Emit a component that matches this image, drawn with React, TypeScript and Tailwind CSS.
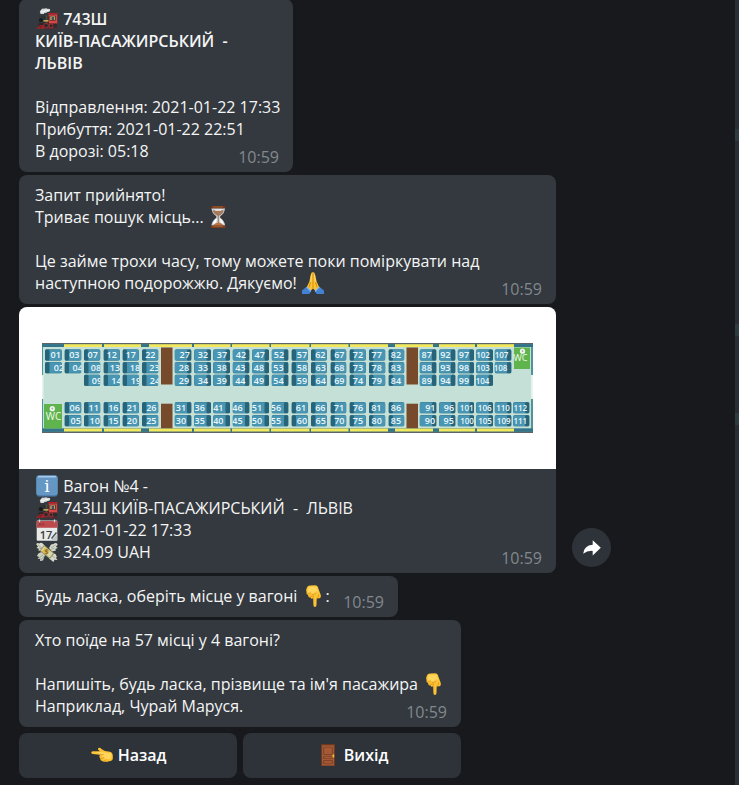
import type { ReactNode } from "react";

const FONT = "'Open Sans', 'Noto Sans', sans-serif";

function Emoji({ label, children }: { label: string; children: ReactNode }) {
  return (
    <svg viewBox="0 0 22 22" role="img" aria-label={label} className="mx-px inline-block size-[22px] align-top">
      {children}
    </svg>
  );
}

function Locomotive() {
  return (
    <Emoji label="Потяг">
      <path d="M5 2.2Q5.500 0 8 .8Q10 -.4 12 .9Q14.500 .6 14.200 2.600Q14 4.200 11.500 4Q10 5.300 8.600 4.800L7.600 6.200L4.500 6.100L4.200 4.500Q3.200 3 5 2.200Z" fill="#d9dadb" />
      <path d="M5 3.500Q7 4.500 9 3.200M9 2Q11 3 12.500 2.400" stroke="#f6f6f6" strokeWidth="1" fill="none" />
      <path d="M3.800 6h5l-.8 2.500v2.500h-3.600V8.500Z" fill="#35383b" />
      <rect x="3" y="8.600" width="11" height="7.800" rx="1.500" fill="#25282a" />
      <circle cx="5" cy="12" r="3.600" fill="#33373a" />
      <circle cx="5" cy="12" r="2" fill="#17191b" />
      <path d="M9.500 7.500h2V17h-2z" fill="#4a4a40" />
      <rect x="7.500" y="12.200" width="5" height="1.300" fill="#e0bd62" />
      <rect x="12" y="5" width="9.800" height="1.600" rx=".6" fill="#b71f25" />
      <rect x="12.800" y="6.600" width="8.400" height="9.900" fill="#db4543" />
      <rect x="13.600" y="7.800" width="6.200" height="4.800" fill="#3d2a2c" />
      <path d="M14.300 8.400h4.800v3.600h-4.800z" fill="#d9b566" />
      <path d="M15.600 9h2.600v3h-2.600z" fill="#3f4f5e" />
      <path d="M1.500 18L4 15.500H21v2.500Z" fill="#2c2526" />
      <circle cx="10" cy="17.500" r="2.800" fill="#8f2c30" />
      <circle cx="10" cy="17.500" r="1.800" fill="#272b2e" />
      <circle cx="15" cy="17.700" r="2.500" fill="#a92c30" />
      <circle cx="15" cy="17.700" r="1.500" fill="#272b2e" />
      <circle cx="19.300" cy="17.800" r="2" fill="#302b2d" />
      <path d="M0 20.800L4 17H7.500L8 20.800Z" fill="#a8252a" />
      <path d="M2 20.500l3-3M4.500 20.500l1.700-3" stroke="#58181b" strokeWidth=".8" />
      <path d="M8 20.600H21.500" stroke="#6d2427" strokeWidth=".8" />
    </Emoji>
  );
}

function Hourglass() {
  return (
    <Emoji label="Пісковий годинник">
      <g transform="translate(-2 0)">
        <path d="M4.500 2h13.500q0 5-4.800 8.200v1.600Q18 15 18 20H4.500q0-5 4.800-8.200v-1.600Q4.500 7 4.500 2Z" fill="#c8d0d6" />
        <path d="M5.700 4.500Q11 3 16.800 4.500Q16 8 11.300 10.300Q6.500 8 5.700 4.500Z" fill="#a5795a" />
        <path d="M7 3h8.500L14 5H8.500Z" fill="#edf3f8" opacity=".75" />
        <path d="M10.800 10h1v7h-1z" fill="#b17547" />
        <path d="M6.200 19.500Q7.800 17 11.300 16.500Q15 17 16.500 19.500Z" fill="#bd733c" />
        <path d="M5.800 18.500Q6.500 14 10 12.200L9.200 16.600ZM16.800 18.500Q15.800 14 12.700 12.200L13.600 16.600Z" fill="#fff" />
        <rect x="3.900" y="0" width="14.700" height="2.600" rx="1" fill="#6f3519" />
        <rect x="3.900" y="19.300" width="14.700" height="2.600" rx="1" fill="#7c3e1e" />
        <path d="M6 1h10M6 20.300h10" stroke="#ae683d" strokeWidth=".8" />
      </g>
    </Emoji>
  );
}

function FoldedHands() {
  return (
    <Emoji label="Складені долоні">
      <path d="M10.900 .3Q9.200 0 8.800 2.500L7.400 9.500L4.500 15.700L7.800 19.500L11 16.500L14.200 19.500L17.500 15.700L14.600 9.500L13.100 2.500Q12.600 0 10.900 .3Z" fill="#fbc332" />
      <path d="M11 1.500V16.500M8.500 10l-1.600 5.500M13.500 10l1.600 5.500" stroke="#d38d17" strokeWidth="1" fill="none" />
      <path d="M9.500 3L8.800 10M12.500 3l.8 7" stroke="#ffdb70" strokeWidth="1" />
      <path d="M0 18.500L4.600 14.800L9 19.500L7.200 22H0Z" fill="#4382d2" />
      <path d="M22 18.500L17.400 14.800L13 19.500L14.800 22H22Z" fill="#4382d2" />
      <path d="M4.600 14.800L9 19.500M17.400 14.800L13 19.500" stroke="#83b6f1" strokeWidth="1.200" />
    </Emoji>
  );
}

function PointDown() {
  return (
    <Emoji label="Вказівник вниз">
      <path d="M4 2.500Q4.500 .2 7.500 .4L12 .2Q15 .5 15.500 4L17.600 9.500Q18.500 12.500 16.500 13.200L13.700 13.500L13.500 20Q13.400 22 12 22Q10.500 22 10.400 20L10.200 13.300Q8.300 14.500 7.500 12.500Q5.200 12.700 5 10Q3 9.500 3.500 7Q2.600 4.700 4 2.500Z" fill="#fcc132" />
      <path d="M5 2.500Q9 .8 14 2L15.300 7Q12 10 8.500 8L4.600 7Z" fill="#ffd65b" />
      <path d="M4.700 8.900Q7 9.200 8 7.500M6.500 12Q9.200 11.500 9.700 9.500M10.200 13.200V9.500Q13 9 13.700 6.500M13.700 13.200Q16.500 12.500 15.500 9.500" stroke="#dc941d" strokeWidth=".8" fill="none" />
    </Emoji>
  );
}

function PointLeft() {
  return (
    <Emoji label="Вказівник ліворуч">
      <path d="M1.600 7.300L9 7.200L7.300 5.900Q6.400 4.600 7.600 3.900Q9 3.400 10.800 5.200L14 7L18.800 7.800Q21.800 8.600 21.800 12V14.500Q21.500 17.200 18 17.300Q15 18.400 11.500 17.200Q9.200 16.400 9.200 14.400Q7.800 13 8.800 10.700L1.600 10Q.2 9.800 .2 8.600Q.2 7.400 1.600 7.300Z" fill="#fcc132" />
      <path d="M1.500 8.100H11L14.500 8.600L20 9.300Q21 12 20 14.500Q16 16 12.500 14Q10.500 12.500 11 10Z" fill="#ffd65b" />
      <path d="M8.800 10.700Q11 11.500 12.800 10.200M9.400 14.200Q11.500 14.800 13.200 13.400M12.400 17Q14.300 17 15 15.600" stroke="#dc941d" strokeWidth=".8" fill="none" />
    </Emoji>
  );
}

function Info() {
  return (
    <Emoji label="Інформація">
      <rect x=".3" y=".5" width="21.400" height="21.200" rx="3" fill="#40688d" />
      <rect x=".3" y=".3" width="21.400" height="20.200" rx="3" fill="#6497c4" />
      <path d="M2.500 1.800h17" stroke="#a8cae8" strokeWidth="1.400" strokeLinecap="round" />
      <text x="11" y="17" textAnchor="middle" fontFamily="'DejaVu Serif', serif" fontWeight="400" fontSize="17" fill="#fff">i</text>
    </Emoji>
  );
}

function Calendar() {
  return (
    <Emoji label="Календар">
      <rect x=".7" y="1.500" width="20.600" height="20.300" rx="1" fill="#e8e9e9" />
      <path d="M.7 2h20.600v6.800H.7z" fill="#bd4b4e" />
      <path d="M3 7l1-3 1.500 3L7 4l1.500 3" stroke="#8e3034" fill="none" strokeWidth=".7" />
      <path d="M3.500 .5v2.800M18.500 .5v2.800" stroke="#d8d8d8" strokeWidth="1.300" />
      <text x="10" y="19.500" textAnchor="middle" fontFamily={FONT} fontSize="11" fontWeight="600" fill="#383c40">17</text>
      <path d="M14.500 21.800L21.300 15.500V21.800Z" fill="#bfc4c6" />
      <path d="M15.500 19.500L20.500 13.500" stroke="#4d5357" strokeWidth="1.400" />
    </Emoji>
  );
}

function WingedMoney() {
  return (
    <Emoji label="Гроші">
      <path d="M.2 3.200Q1.200 1 3.500 2.500Q5 1 7.300 3L10 6.500L7.200 10L2.200 9.500L3 7.800L.5 7L2 5.500Z" fill="#dcdccd" />
      <path d="M21.700 3.500Q20 .8 17.500 3L15 3.500L13 7L16 10.500L20 9.500L19.300 8L21.800 7L20 5.800Z" fill="#d6d7c9" />
      <path d="M1 15Q2 11.500 6 11L9 14L7 19.500L4 20L4.300 17.800L1.800 18L3 16Z" fill="#ccd0be" />
      <path d="M15 12L19.500 13L21 16L19.800 16.500L21.500 19L18.500 18.800L17.500 21L13 17.500Z" fill="#d7d8cc" />
      <path d="M2 4l4 3M3 6.800l3.500 1.500M19.500 4L15 7M18.500 7l-3 1.500M3 17l4-3M5.500 18.500L8 15M19 17l-4-3" stroke="#999e8e" strokeWidth=".8" />
      <path d="M8 4L18.500 12.500L13.800 18L3.500 9.800Z" fill="#9a9a69" />
      <path d="M8.300 5.200L17 12.300L13.600 16.500L4.900 9.500Z" fill="#d9d6a9" />
      <path d="M9.500 6.200L13.700 9.700L10.300 14L6 10.500Z" fill="#e2b843" />
      <text x="10.600" y="13" textAnchor="middle" fontFamily={FONT} fontSize="7" fontWeight="600" fill="#74662f">$</text>
    </Emoji>
  );
}

function Door() {
  return (
    <Emoji label="Двері">
      <rect x="4" y="0" width="14" height="22" fill="#70371f" />
      <rect x="5.200" y="1.400" width="11.600" height="20" fill="#ae633e" />
      <path d="M6.600 3h8.800v7.500H6.600zM6.600 12.200h8.800v2.600H6.600zM6.600 16.600h8.800v3.300H6.600z" fill="#a65734" stroke="#743c24" strokeWidth=".8" />
      <path d="M15.500 10.500h1.700v3h-1.700z" fill="#e7c33f" />
    </Emoji>
  );
}

type Facing = "left" | "right";
type SeatCell = { label: string; at: number };
type Column = { x: number; w: number; facing: Facing; top: SeatCell[]; bottom: SeatCell[] };

function column(x: number, w: number, facing: Facing, top: [string, number][], bottom: [string, number][]): Column {
  const cells = (list: [string, number][]) => list.map(([label, at]) => ({ label, at }));
  return { x, w, facing, top: cells(top), bottom: cells(bottom) };
}

// Each label is paired with the centre of its number along the carriage.
const COLUMNS: Column[] = [
  column(45, 17, "left", [["01", 55.7], ["02", 59]], []),
  column(64.5, 17, "left", [["03", 74.3], ["04", 77.7]], [["06", 74.7], ["05", 75.7]]),
  column(84, 16.5, "left", [["07", 92.7], ["08", 96], ["09", 97]], [["11", 93.7], ["10", 94.7]]),
  column(103.5, 16.5, "left", [["12", 111.7], ["13", 115], ["14", 116.5]], [["16", 113.3], ["15", 113.3]]),
  column(122.5, 16.5, "left", [["17", 130.7], ["18", 135], ["19", 136]], [["21", 132], ["20", 132]]),
  column(142, 16.5, "left", [["22", 150.3], ["23", 154.500], ["24", 155]], [["26", 151.3], ["25", 151.3]]),
  column(174.5, 17, "right", [["27", 184.7], ["28", 184], ["29", 184]], [["31", 181], ["30", 181]]),
  column(194, 17, "right", [["32", 203], ["33", 203], ["34", 203]], [["36", 199.7], ["35", 199.7]]),
  column(213, 17, "right", [["37", 222], ["38", 221.7], ["39", 221.7]], [["41", 218.3], ["40", 218.3]]),
  column(232.5, 17, "right", [["42", 241], ["43", 240.3], ["44", 240.3]], [["46", 237.5], ["45", 237.5]]),
  column(252, 17, "right", [["47", 259.7], ["48", 259], ["49", 259]], [["51", 257], ["50", 257]]),
  column(271.5, 17, "right", [["52", 279], ["53", 278.5], ["54", 278.5]], [["56", 276], ["55", 276]]),
  column(291.5, 16.5, "left", [["57", 302], ["58", 302], ["59", 302]], [["61", 301], ["60", 302]]),
  column(311, 16, "left", [["62", 320.3], ["63", 320.7], ["64", 320.7]], [["66", 320.3], ["65", 320.7]]),
  column(330.5, 16, "left", [["67", 339.3], ["68", 339.3], ["69", 339.3]], [["71", 339], ["70", 339.3]]),
  column(349.5, 16.5, "left", [["72", 358], ["73", 358], ["74", 358]], [["76", 358], ["75", 358]]),
  column(369, 16.5, "left", [["77", 376.7], ["78", 376.7], ["79", 376.7]], [["81", 376.3], ["80", 376.7]]),
  column(388.5, 16, "left", [["82", 396], ["83", 396], ["84", 396]], [["86", 396], ["85", 396]]),
  column(419.5, 17, "right", [["87", 426.7], ["88", 426.7], ["89", 426.7]], [["91", 430.3], ["90", 430]]),
  column(439, 16.5, "right", [["92", 445.3], ["93", 445.3], ["94", 445.3]], [["96", 449], ["95", 448.7]]),
  column(457.5, 16.5, "right", [["97", 464], ["98", 464], ["99", 464]], [["101", 466.7], ["100", 467]]),
  column(476, 17, "right", [["102", 483], ["103", 483], ["104", 482.500]], [["106", 484.7], ["105", 485]]),
  column(494.5, 17, "right", [["107", 501.5], ["108", 500.500]], [["110", 503], ["109", 503.7]]),
  column(513, 16.5, "right", [], [["112", 520.3], ["111", 520.3]]),
];

const TOP_ROWS = [349, 361.7, 374.3];
const BOTTOM_ROWS = [401.8, 414.8];
const YELLOW: [number, number][] = [
  [64, 102], [104, 141], [149, 192], [194, 230.5], [232, 269.5], [271, 309.5], [311, 348.5], [350, 388], [395, 433], [439, 475], [477, 514],
];

function Seat({ x, y, w, facing, cell }: { x: number; y: number; w: number; facing: Facing; cell: SeatCell }) {
  return (
    <svg x={x} y={y} width={w} height={12} viewBox={`0 0 ${w} 12`}>
      <rect x={0} y={0.2} width={w} height={11.6} rx={2} fill="#3a7d94" />
      <rect x={facing === "left" ? 3 : 0.3} y={0.7} width={w - 3.300} height={10.400} rx={1.500} fill="#4896b3" />
      <rect x={facing === "left" ? 0 : w - 4.5} y={0.5} width={4.5} height={11} rx={1.5} fill="#27647a" />
      <text x={cell.at - x} y={9.400} textAnchor="middle" fontFamily={FONT} fontWeight={600} fontSize={cell.label.length > 2 ? 8 : 9} fill="#eef8fb">
        {cell.label}
      </text>
    </svg>
  );
}

function CarriageMap() {
  return (
    <svg viewBox="19 307 537 162" role="img" aria-label="Схема місць вагона №4" className="block w-full rounded-t-lg bg-white">
      <rect x="42" y="343" width="491" height="90" fill="#4f9499" />
      <rect x="43" y="347" width="488" height="81.500" fill="#c5e1d7" />
      <rect x="42" y="343" width="491" height="1.300" fill="#5b6467" />
      <rect x="42" y="431.600" width="491" height="1.400" fill="#5b6467" />
      <rect x="42" y="344.200" width="491" height="2.800" fill="#34748a" />
      <rect x="42" y="428.500" width="491" height="3.100" fill="#34748a" />
      <path d="M42 375h1.500v24H42zM531 375h2v24h-2z" fill="#e4f5ef" />
      {YELLOW.map(([from, to]) => (
        <g key={from} fill="#f3e75b">
          <rect x={from} y={344.2} width={to - from} height={2.8} />
          <rect x={from} y={428.5} width={to - from} height={3} />
        </g>
      ))}
      <g fill="#764a2a">
        <rect x="161" y="347.500" width="11.500" height="37" />
        <rect x="161" y="403.700" width="11.500" height="24.500" />
        <rect x="406.500" y="347.500" width="11.500" height="37" />
        <rect x="406.500" y="403.700" width="11.500" height="24.500" />
      </g>
      {COLUMNS.map((c) => (
        <g key={c.x}>
          {c.top.map((cell, i) => (
            <Seat key={cell.label} x={c.x} y={TOP_ROWS[i]} w={c.w} facing={c.facing} cell={cell} />
          ))}
          {c.bottom.map((cell, i) => (
            <Seat key={cell.label} x={c.x} y={BOTTOM_ROWS[i]} w={c.w} facing={c.facing} cell={cell} />
          ))}
        </g>
      ))}
      <rect x="44" y="404" width="18" height="24.500" fill="#60b44d" />
      <circle cx="52.300" cy="408.700" r="2.600" fill="#f1f7ee" />
      <circle cx="52.300" cy="408.500" r="1" fill="#a7b6a7" />
      <text x="53.500" y="420" textAnchor="middle" fontFamily={FONT} fontSize="10" fill="#f3faee">WC</text>
      <rect x="514" y="347.500" width="16" height="21.500" fill="#60b44d" />
      <circle cx="522.500" cy="351.200" r="2.600" fill="#f1f7ee" />
      <circle cx="522.500" cy="351" r="1" fill="#a7b6a7" />
      <text x="520.500" y="361" textAnchor="middle" fontFamily={FONT} fontSize="9" fill="#f3faee">WC</text>
    </svg>
  );
}

function Time() {
  return <time className="-mt-4 -mr-0.5 -mb-1.5 self-end text-[#82888d]">10:59</time>;
}

const BODY = "flex flex-col whitespace-pre-wrap px-4 pt-[9px] pb-2.5";
const BUBBLE = "max-w-full rounded-lg bg-[#33393f]";

export default function App() {
  return (
    <div className="flex min-h-screen items-stretch overflow-hidden bg-[#18191d] font-['Open_Sans','Noto_Sans',sans-serif] text-base/[22px] text-[#f5f5f5]">
      <main className="-mt-px flex min-w-0 flex-1 flex-col items-start gap-[3px] pb-[7px] pl-[19px]">
        <article className={`${BUBBLE} ${BODY} w-[274px]`}>
          <p className="font-semibold">
            <Locomotive />{" 743Ш\nКИЇВ-ПАСАЖИРСЬКИЙ  -\nЛЬВІВ"}
          </p>
          <p className="mt-[22px] whitespace-pre">Відправлення: 2021-01-22 17:33</p>
          <p>Прибуття: 2021-01-22 22:51</p>
          <p>В дорозі: 05:18</p>
          <Time />
        </article>

        <article className={`${BUBBLE} ${BODY} w-[537px]`}>
          <p>
            {"Запит прийнято!\nТриває пошук місць... "}<Hourglass />
          </p>
          <p className="mt-[22px]">
            {"Це займе трохи часу, тому можете поки поміркувати над\nнаступною подорожжю. Дякуємо! "}<FoldedHands />
          </p>
          <Time />
        </article>

        <div className="flex max-w-full items-end gap-4">
          <article className={`${BUBBLE} w-[537px]`}>
            <CarriageMap />
            <div className="flex flex-col whitespace-pre-wrap px-4 pt-1.5 pb-2.5">
              <p><Info />{" Вагон №4 -"}</p>
              <p><Locomotive />{" 743Ш КИЇВ-ПАСАЖИРСЬКИЙ  -  ЛЬВІВ"}</p>
              <p><Calendar />{" 2021-01-22 17:33"}</p>
              <p><WingedMoney />{" 324.09 UAH"}</p>
              <Time />
            </div>
          </article>
          <button type="button" aria-label="Переслати" className="mb-1.5 flex size-[39px] shrink-0 items-center justify-center rounded-full bg-[#2e333a]">
            <svg viewBox="0 0 18 16" className="h-4 w-[18px]" fill="#fff" aria-hidden="true">
              <path d="M9.700 .3L17.800 7.800L9.700 15.500V10.900Q4 10.600 .2 13.800Q.8 5.500 9.700 4.700Z" />
            </svg>
          </button>
        </div>

        <article className={`${BUBBLE} ${BODY} w-[379px]`}>
          <p>
            {"Будь ласка, оберіть місце у вагоні "}<PointDown />:
          </p>
          <Time />
        </article>

        <section className="flex w-[442px] max-w-full flex-col gap-1.5">
          <article className={`${BUBBLE} ${BODY}`}>
            <p>Хто поїде на 57 місці у 4 вагоні?</p>
            <p className="mt-[22px] whitespace-pre">
              {"Напишіть, будь ласка, прізвище та ім'я пасажира "}<PointDown />
            </p>
            <p>Наприклад, Чурай Маруся.</p>
            <Time />
          </article>
          <div className="grid grid-cols-2 gap-1.5 font-semibold text-white">
            <button type="button" className="h-[45px] rounded-lg bg-[#2e333a] pb-0.5 whitespace-pre">
              <PointLeft />{" Назад"}
            </button>
            <button type="button" className="h-[45px] rounded-lg bg-[#2e333a] pb-0.5 whitespace-pre">
              <Door />{" Вихід"}
            </button>
          </div>
        </section>
      </main>
      <div aria-hidden="true" className="flex w-1 shrink-0 flex-col bg-[#282e33]">
        <span className="mt-[129px] h-3 bg-[#2f3b42]" />
        <span className="mt-[183px] h-3 bg-[#2f3b42]" />
        <span className="mt-[77px] h-3 bg-[#2f3b42]" />
      </div>
    </div>
  );
}
